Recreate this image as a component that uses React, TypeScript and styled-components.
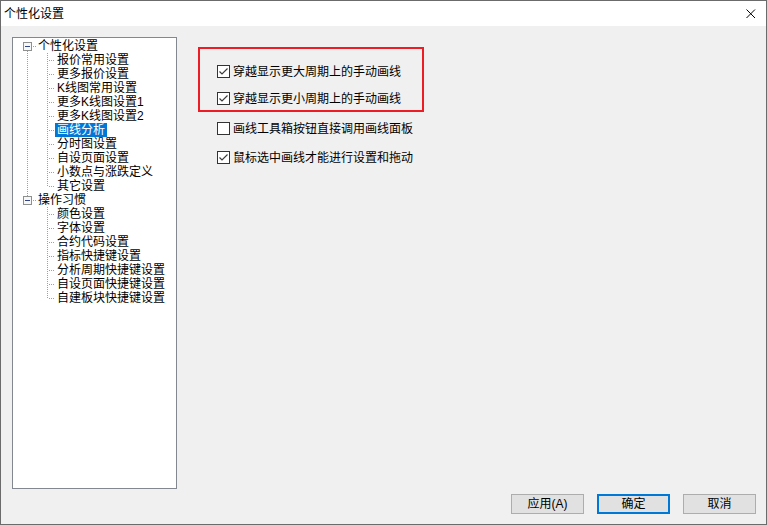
import React from "react";
import styled, { createGlobalStyle } from "styled-components";

const GlobalStyle = createGlobalStyle`
  html, body { margin: 0; padding: 0; background: #ffffff; }
  * { box-sizing: border-box; }
`;

const FONT = `"Liberation Sans", "Noto Sans CJK SC", sans-serif`;

const Window = styled.div`
  width: 767px;
  height: 525px;
  border: 1px solid #6b6b6b;
  display: flex;
  flex-direction: column;
  font-family: ${FONT};
  font-size: 12px;
  color: #000;
  background: #f0f0f0;
`;

const TitleBar = styled.div`
  height: 25px;
  background: #ffffff;
  display: flex;
  align-items: center;
  justify-content: space-between;
  padding: 0 10px 0 3px;
`;

const TitleText = styled.span`
  font-size: 12px;
  line-height: 14px;
  color: #000;
`;

const CloseBtn = styled.div`
  width: 10px;
  height: 10px;
  display: flex;
  margin-top: 1px;
`;

const Body = styled.div`
  flex: 1;
  display: flex;
  flex-direction: column;
  padding: 11px 10px 10px 11px;
`;

const Main = styled.div`
  height: 452px;
  display: flex;
`;

const TreeBox = styled.div`
  width: 165px;
  height: 452px;
  background: #ffffff;
  border: 1px solid #828790;
  padding-top: 1px;
  display: flex;
  flex-direction: column;
`;

const TreeRow = styled.div`
  height: 14px;
  display: flex;
  align-items: stretch;
`;

const TreeLabel = styled.span<{ $selected?: boolean }>`
  height: 14px;
  line-height: 14px;
  padding: 0 2px;
  white-space: nowrap;
  font-size: 12px;
  background: ${(p) => (p.$selected ? "#0078d7" : "transparent")};
  color: ${(p) => (p.$selected ? "#ffffff" : "#000000")};
`;

const Options = styled.div`
  display: flex;
  flex-direction: column;
  margin-left: 21px;
  padding-top: 10px;
`;

const RedBox = styled.div`
  width: 226px;
  height: 65px;
  border: 2px solid #ee1c25;
  padding: 16px 0 0 17px;
  display: flex;
  flex-direction: column;
  gap: 14px;
`;

const OptionRow = styled.label<{ $mt?: number; $ml?: number }>`
  display: flex;
  align-items: center;
  height: 13px;
  margin-top: ${(p) => p.$mt ?? 0}px;
  margin-left: ${(p) => p.$ml ?? 0}px;
  white-space: nowrap;
`;

const Box = styled.span`
  width: 13px;
  height: 13px;
  border: 1px solid #333333;
  background: #ffffff;
  display: flex;
  align-items: center;
  justify-content: center;
  flex: none;
`;

const OptionText = styled.span`
  margin-left: 3px;
  font-size: 12px;
  line-height: 14px;
`;

const ButtonBar = styled.div`
  margin-top: 5px;
  height: 20px;
  display: flex;
  justify-content: flex-end;
  gap: 13px;
`;

const Button = styled.button<{ $default?: boolean }>`
  width: 73px;
  height: 20px;
  margin: 0;
  padding: 0;
  font-family: ${FONT};
  font-size: 12px;
  line-height: 14px;
  color: #000;
  background: #e1e1e1;
  border: ${(p) => (p.$default ? "2px solid #0078d7" : "1px solid #adadad")};
  display: flex;
  align-items: center;
  justify-content: center;
`;

type Root = { label: string; children: string[] };

const tree: Root[] = [
  {
    label: "个性化设置",
    children: [
      "报价常用设置",
      "更多报价设置",
      "K线图常用设置",
      "更多K线图设置1",
      "更多K线图设置2",
      "画线分析",
      "分时图设置",
      "自设页面设置",
      "小数点与涨跌定义",
      "其它设置",
    ],
  },
  {
    label: "操作习惯",
    children: [
      "颜色设置",
      "字体设置",
      "合约代码设置",
      "指标快捷键设置",
      "分析周期快捷键设置",
      "自设页面快捷键设置",
      "自建板块快捷键设置",
    ],
  },
];

const DOT = "#a0a0a0";

const RootGuide: React.FC<{ first: boolean; last: boolean }> = ({ first, last }) => (
  <svg width={23} height={14} style={{ flex: "none" }}>
    {!first && (
      <line x1={14.5} y1={0} x2={14.5} y2={3} stroke={DOT} strokeDasharray="1 1" />
    )}
    {!last && (
      <line x1={14.5} y1={12} x2={14.5} y2={14} stroke={DOT} strokeDasharray="1 1" />
    )}
    <rect x={10.5} y={3.5} width={8} height={8} fill="#f7f7f7" stroke="#8e8f8f" />
    <line x1={12} y1={7.5} x2={17} y2={7.5} stroke="#33458a" />
    <line x1={20} y1={7.5} x2={23} y2={7.5} stroke={DOT} strokeDasharray="1 1" />
  </svg>
);

const ChildGuide: React.FC<{ rootContinues: boolean; lastChild: boolean }> = ({
  rootContinues,
  lastChild,
}) => (
  <svg width={42} height={14} style={{ flex: "none" }}>
    {rootContinues && (
      <line x1={14.5} y1={0} x2={14.5} y2={14} stroke={DOT} strokeDasharray="1 1" />
    )}
    <line
      x1={34.5}
      y1={0}
      x2={34.5}
      y2={lastChild ? 8 : 14}
      stroke={DOT}
      strokeDasharray="1 1"
    />
    <line x1={36} y1={7.5} x2={42} y2={7.5} stroke={DOT} strokeDasharray="1 1" />
  </svg>
);

const Check: React.FC<{ checked: boolean }> = ({ checked }) => (
  <Box>
    {checked && (
      <svg width={11} height={11} viewBox="0 0 11 11">
        <polyline
          points="1.5,5.5 4,8 9.5,2.5"
          fill="none"
          stroke="#3c3c3c"
          strokeWidth={1.2}
        />
      </svg>
    )}
  </Box>
);

export default function App() {
  return (
    <>
      <GlobalStyle />
      <Window>
        <TitleBar>
          <TitleText>个性化设置</TitleText>
          <CloseBtn>
            <svg width={10} height={10} viewBox="0 0 10 10">
              <path d="M0.5 0.5 L9 9 M9 0.5 L0.5 9" stroke="#000" strokeWidth={1} />
            </svg>
          </CloseBtn>
        </TitleBar>
        <Body>
          <Main>
            <TreeBox>
              {tree.map((root, ri) => (
                <React.Fragment key={root.label}>
                  <TreeRow>
                    <RootGuide first={ri === 0} last={ri === tree.length - 1} />
                    <TreeLabel>{root.label}</TreeLabel>
                  </TreeRow>
                  {root.children.map((c, ci) => (
                    <TreeRow key={c}>
                      <ChildGuide
                        rootContinues={ri < tree.length - 1}
                        lastChild={ci === root.children.length - 1}
                      />
                      <TreeLabel $selected={c === "画线分析"}>{c}</TreeLabel>
                    </TreeRow>
                  ))}
                </React.Fragment>
              ))}
            </TreeBox>
            <Options>
              <RedBox>
                <OptionRow>
                  <Check checked />
                  <OptionText>穿越显示更大周期上的手动画线</OptionText>
                </OptionRow>
                <OptionRow>
                  <Check checked />
                  <OptionText>穿越显示更小周期上的手动画线</OptionText>
                </OptionRow>
              </RedBox>
              <OptionRow $mt={10} $ml={19}>
                <Check checked={false} />
                <OptionText>画线工具箱按钮直接调用画线面板</OptionText>
              </OptionRow>
              <OptionRow $mt={16} $ml={19}>
                <Check checked />
                <OptionText>鼠标选中画线才能进行设置和拖动</OptionText>
              </OptionRow>
            </Options>
          </Main>
          <ButtonBar>
            <Button>应用(A)</Button>
            <Button $default>确定</Button>
            <Button>取消</Button>
          </ButtonBar>
        </Body>
      </Window>
    </>
  );
}
